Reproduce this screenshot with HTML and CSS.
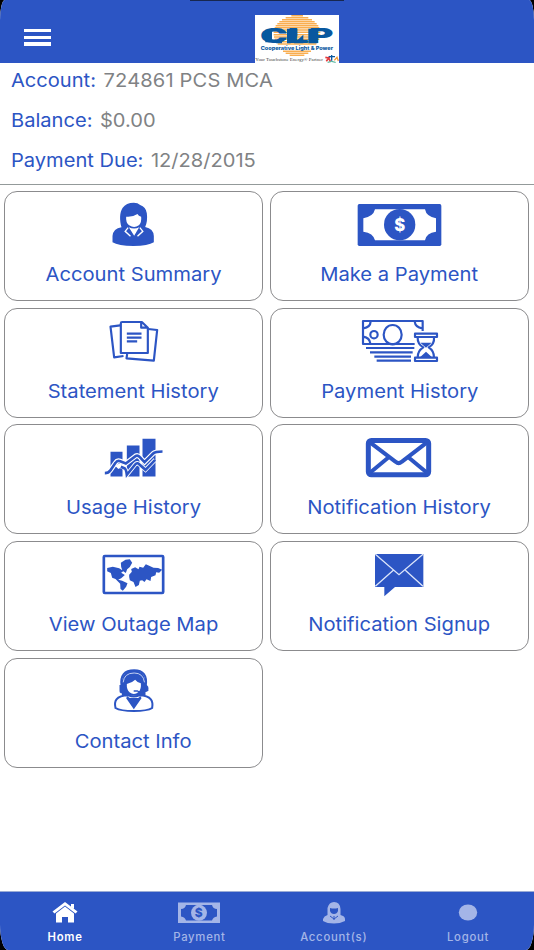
FILE: index.html
```html
<!DOCTYPE html>
<html lang="en">
<head>
    <meta charset="UTF-8">
    <meta name="viewport" content="width=device-width, initial-scale=1.0">
    <title>Cooperative Light &amp; Power</title>
    <link rel="stylesheet" href="styles.css">
</head>
<body>
    <div class="app">
        <div class="notch"></div>
        <header class="header">
            <button class="menu-btn" aria-label="Menu"><span></span><span></span><span></span></button>
            <svg class="logo" viewBox="45 30 252 144">
                <rect x="45" y="30" width="252" height="144" fill="#fff"/>
                <g stroke="#f9ae50" stroke-width="4.5">
                    <path d="M154 32h35M137 38h68M126 44h90M118 50h106M112 56h118M107 62h128M104 68h134M102 75h138M101 82h140M101 89h140M102 96h138M104 103h134M108 110h126M113 117h116M129 139h84M137 145h68M149 151h44"/>
                </g>
                <text class="logo-name" x="60" y="115" textLength="220" lengthAdjust="spacingAndGlyphs">CLP</text>
                <path d="M76 74h20v38H76zM108 71h18v14zM108 115h18v-14zM141 71h31v22l-20 22h-11zM162 115l28-26v26zM205 71h27v44h-27z" fill="#08589f"/>
                <text class="logo-sub" x="62" y="134" textLength="217" lengthAdjust="spacingAndGlyphs">Cooperative Light &amp; Power</text>
                <text class="logo-tag" x="46" y="167" textLength="203" lengthAdjust="spacingAndGlyphs">Your Touchstone Energy® Partner</text>
                <path d="M256 157l10 2 5 10M270 154l-11 15" fill="none" stroke="#e23b3d" stroke-width="5"/>
                <path d="M275 150v17M266 155h19" stroke="#08589f" stroke-width="4"/>
                <path d="M283 166l8-9 4 11" fill="none" stroke="#f39a35" stroke-width="4"/>
                <path d="M263 172q12-5 24 0" fill="none" stroke="#38a98b" stroke-width="3"/>
            </svg>
        </header>

        <section class="account">
            <div class="account-row number"><span class="label">Account:</span><span class="value">724861 PCS MCA</span></div>
            <div class="account-row"><span class="label">Balance:</span><span class="value">$0.00</span></div>
            <div class="account-row"><span class="label">Payment Due:</span><span class="value">12/28/2015</span></div>
        </section>

        <main class="tiles">
            <a class="tile">
                <svg class="tile-icon" viewBox="-4.5 0 240 180">
                    <path class="fill" d="M78 97C72 76 72 53 81 39Q92 23 115 23Q127 23 134 30Q151 35 154 55Q157 79 149 96Q174 101 175 123V142Q158 153 114 153Q68 153 51 142V123Q53 101 78 97z"/>
                    <path class="paper" d="M92 65Q111 67 126 57Q129 63 137 65Q139 82 130 91Q116 101 101 91Q90 82 92 65zM100 97Q116 104 131 97L116 122z"/>
                    <path class="paper-line" d="M98 98L89 109L105 124M133 98L142 109L126 124"/>
                </svg>
                <span>Account Summary</span>
            </a>
            <a class="tile">
                <svg class="tile-icon wide" viewBox="0 0 300 180">
                    <rect class="fill" x="23" y="27" width="251" height="126" rx="5"/>
                    <path class="paper" d="M75 43H225Q229 65 258 70V110Q229 113 225 136H75Q70 114 40 110V70Q70 65 75 43z"/>
                    <circle class="fill" cx="149" cy="89" r="47"/>
                    <text class="dollar" x="149" y="107">$</text>
                </svg>
                <span>Make a Payment</span>
            </a>
            <a class="tile">
                <svg class="tile-icon" viewBox="-4.5 0 240 180">
                    <g class="line">
                        <path d="M74 40L45 44L56 136L84 132M158 51L185 54L175 146L93 139L95 126"/>
                        <path d="M80 30H139L157 47V123H76V34Q76 30 80 30zM137 32V47H156M94 65H138M94 77H138M94 88H125"/>
                    </g>
                </svg>
                <span>Statement History</span>
            </a>
            <a class="tile">
                <svg class="tile-icon wide" viewBox="0 0 300 180">
                    <g class="line">
                        <path d="M194 96H39V27H218V57M62 28Q61 46 40 49M194 28Q196 46 217 49M40 74Q59 77 61 95M48 108H193M60 121H188M73 134H183M80 146H183"/>
                        <ellipse cx="128" cy="68" rx="27" ry="29"/>
                        <circle cx="72" cy="68" r="11"/>
                        <path d="M195 65H261V75H195zM195 137H261V147H195zM203 76Q202 96 220 106Q203 116 203 136M252 76Q254 96 236 106Q252 116 252 136"/>
                    </g>
                    <path class="fill" d="M211 92H245L228 107zM210 136L228 119L246 136z"/>
                </svg>
                <span>Payment History</span>
            </a>
            <a class="tile">
                <svg class="tile-icon" viewBox="-4.5 -4.5 240 180">
                    <path class="fill" d="M45 67H81V141H45zM94 48H132V141H94zM141 28H180V141H141z"/>
                    <path class="chart-gap" d="M28 131Q39 131 45 122L60 100Q65 92 74 95L91 102L121 79Q127 76 133 83L147 98L173 72Q179 66 201 66"/>
                    <path class="chart-gap lower" d="M64 114Q70 108 76 110L88 116Q92 120 94 136L119 105Q125 98 131 104L150 121L179 91"/>
                    <path class="chart-line" d="M28 131Q39 131 45 122L60 100Q65 92 74 95L91 102L121 79Q127 76 133 83L147 98L173 72Q179 66 201 66M76 112L88 117Q92 120 94 136L119 105Q125 98 131 104L150 121L179 91"/>
                </svg>
                <span>Usage History</span>
            </a>
            <a class="tile">
                <svg class="tile-icon wide" viewBox="0 -4.5 300 180">
                    <rect class="envelope" x="55" y="33" width="181" height="103" rx="9"/>
                    <path class="envelope flap" d="M59 38L137 97Q146 105 155 97L232 38M60 130L116 83M231 130L175 83"/>
                </svg>
                <span>Notification History</span>
            </a>
            <a class="tile">
                <svg class="tile-icon" viewBox="-4.5 0 240 180">
                    <rect class="map-frame" x="25" y="33" width="178" height="111" rx="3"/>
                    <path class="fill" d="M35 69L52 65L71 70L84 78L77 83L88 90L77 100L68 104L80 107L96 115L92 125L82 137L75 132L74 116L60 102L50 98L46 84L35 79zM76 53L90 44L103 43L110 53L103 66L95 73L91 84L81 77L77 66z"/>
                    <path class="fill" d="M101 89L109 80L107 72L119 67L129 73L132 65L143 68L151 58L161 62L174 68L188 69L200 74L191 83L182 82L180 91L167 96L165 108L153 103L147 111L140 106L133 107L130 120L120 126L114 111L103 106L101 96z"/>
                </svg>
                <span>View Outage Map</span>
            </a>
            <a class="tile">
                <svg class="tile-icon wide" viewBox="0 0 300 180">
                    <path class="fill" d="M75 27H220V126H135L103 154V126H75z"/>
                    <path class="fold" d="M76 28L147 89L219 28M76 124L130 76M219 124L166 76"/>
                </svg>
                <span>Notification Signup</span>
            </a>
            <a class="tile">
                <svg class="tile-icon" viewBox="-4.5 6 240 180">
                    <path class="fill" d="M79 107V62Q83 32 115 31Q147 32 150 63V107z"/>
                    <path class="headset" d="M78 77Q72 31 116 31Q157 31 151 77"/>
                    <path class="headset-gap" d="M83 67Q86 39 116 39Q143 39 147 67"/>
                    <path class="fill" d="M72 75h10v25h-6q-5-2-4-9zM147 75h7q6 5 5 12q-1 8-12 10z"/>
                    <path class="paper" d="M94 72Q110 68 119 59Q125 67 136 70Q138 88 129 96Q116 107 102 97Q93 88 94 72z"/>
                    <path class="contact-body" d="M99 106Q72 107 63 118Q56 127 60 144Q75 153 115 153Q156 153 170 144Q173 127 166 118Q157 107 131 106Q115 113 99 106z"/>
                    <path class="fill" d="M95 109L103 114H128L135 109L138 115L115 148L92 115z"/>
                    <path class="mic" d="M116 93H126Q133 98 145 95L157 91"/>
                </svg>
                <span>Contact Info</span>
            </a>
        </main>

        <nav class="tabs">
            <a class="tab active">
                <svg class="tab-icon" viewBox="0 0 44 24">
                    <path d="M22 1L34.5 10.5L32.5 12.5L22 4.5L11.5 12.5L9.5 10.5z"/>
                    <path d="M22 5.5L31 12.5V21.5H25V16H19V21.5H13V12.5z"/>
                    <path d="M28 3h3v5l-3-2z"/>
                </svg>
                <span>Home</span>
            </a>
            <a class="tab">
                <svg class="tab-icon" viewBox="0 0 44 24">
                    <path fill-rule="evenodd" d="M1 1.5H43V22H1zM9 4Q8 8 4 8V15.5Q8 16 9 19.5H35Q36 16 40 15.5V8Q36 8 35 4z"/>
                    <circle cx="22" cy="11.8" r="8"/>
                    <text class="tab-dollar" x="22" y="16">$</text>
                </svg>
                <span>Payment</span>
            </a>
            <a class="tab">
                <svg class="tab-icon" viewBox="0 0 44 24">
                    <path fill-rule="evenodd" d="M15.5 14V7Q17 1 22 1Q28 1 28.5 8V14Q33 15 33 18V20Q28 22.5 22 22.5Q15 22.5 11 20V18Q12 15 15.5 14zM18 7Q22 8 26 7V10Q25 13 22 13Q19 13 18 10z"/>
                    <path class="collar" d="M18 15L22 18L26 15M22 15V19"/>
                </svg>
                <span>Account(s)</span>
            </a>
            <a class="tab">
                <svg class="tab-icon" viewBox="0 0 44 24"><ellipse cx="22" cy="11.5" rx="9.2" ry="8"/></svg>
                <span>Logout</span>
            </a>
        </nav>
    </div>
</body>
</html>
```
FILE: styles.css
```css
* {
    box-sizing: border-box;
}

body {
    margin: 0;
    background-color: #000;
    font-family: Inter, "Liberation Sans", sans-serif;
    font-size: 18.7px;
    color: #2c55c4;
}

.app {
    height: 950px;
    display: flex;
    flex-direction: column;
    position: relative;
    overflow: hidden;
    background-color: #fff;
    border-radius: 5px 5px 8px 8px / 20px 20px 26px 26px;
}

.notch {
    position: absolute;
    top: 0;
    left: 190px;
    width: 154px;
    height: 1px;
    background-color: #17274f;
}

.header {
    height: 63px;
    flex-shrink: 0;
    display: flex;
    align-items: flex-start;
    background-color: #2c55c4;
    padding: 15px 0 0 24px;
}

.menu-btn {
    width: 27px;
    margin: 14px 204px 0 0;
    padding: 0;
    border: none;
    background: none;
    display: flex;
    flex-direction: column;
    gap: 3.5px;
}

.menu-btn span {
    height: 3.2px;
    background-color: #fff;
}

.logo {
    width: 84px;
    height: 48px;
}

.logo-name {
    font-size: 60px;
    font-weight: 900;
    fill: #08589f;
}

.logo-sub {
    font-size: 14px;
    font-weight: 800;
    fill: #08589f;
}

.logo-tag {
    font-family: "Liberation Serif", serif;
    font-size: 14px;
    fill: #444;
}

.account {
    height: 121.5px;
    flex-shrink: 0;
    padding: 0 11px;
    border-bottom: 1.5px solid #939a9a;
}

/* labels are set slightly extended */
.account-row {
    height: 40px;
    padding-top: 5.5px;
    line-height: 24px;
    display: flex;
    gap: 7px;
    white-space: nowrap;
    transform: scaleX(1.075);
    transform-origin: left;
}

.number .value {
    letter-spacing: 0.15px;
}

.value {
    color: #808284;
}

.tiles {
    flex: 1;
    display: grid;
    grid-template-columns: 259px 259px;
    grid-auto-rows: 110px;
    gap: 6.7px 7px;
    padding: 6.5px 4px;
}

.tile {
    display: flex;
    flex-direction: column;
    align-items: center;
    padding-top: 3px;
    border: 1.4px solid #8b8b8d;
    border-radius: 13px;
    white-space: nowrap;
}

.tile span {
    line-height: 24px;
    margin-top: 8px;
    transform: scaleX(1.08);
}

.tile-icon {
    width: 80px;
    height: 60px;
    flex-shrink: 0;
}

.tile-icon.wide {
    width: 100px;
}

.fill {
    fill: #2c55c4;
}

.paper {
    fill: #fff;
}

.paper-line {
    fill: none;
    stroke: #fff;
    stroke-width: 4;
}

.line {
    fill: none;
    stroke: #2c55c4;
    stroke-width: 6.5;
    stroke-linejoin: round;
}

.dollar {
    font-size: 50px;
    font-weight: 800;
    text-anchor: middle;
    fill: #fff;
}

.chart-gap {
    fill: none;
    stroke: #fff;
    stroke-width: 15;
}

.chart-gap.lower {
    stroke-width: 13;
}

.chart-line {
    fill: none;
    stroke: #2c55c4;
    stroke-width: 8;
}

.envelope {
    fill: none;
    stroke: #2c55c4;
    stroke-width: 15;
}

.envelope.flap {
    stroke-width: 12;
}

.map-frame {
    fill: none;
    stroke: #2c55c4;
    stroke-width: 8;
}

.fold {
    fill: none;
    stroke: #dce5fa;
    stroke-width: 4;
}

.headset {
    fill: none;
    stroke: #2c55c4;
    stroke-width: 6;
}

.headset-gap {
    fill: none;
    stroke: #c3d0f3;
    stroke-width: 3;
}

.contact-body {
    fill: #fff;
    stroke: #2c55c4;
    stroke-width: 6;
}

.mic {
    fill: none;
    stroke: #2c55c4;
    stroke-width: 4;
    stroke-linecap: round;
}

.tabs {
    height: 59.5px;
    flex-shrink: 0;
    display: grid;
    grid-template-columns: repeat(4, 134.3px);
    margin-left: -2px;
    background-color: #2c55c4;
    border-top: 1px solid #9bacd5;
}

.tab {
    display: flex;
    flex-direction: column;
    align-items: center;
    padding-top: 9px;
    font-size: 11.3px;
    font-weight: 500;
    letter-spacing: 0.75px;
    color: #a4b5e7;
    fill: #a4b5e7;
}

.tab.active {
    color: #fff;
    fill: #fff;
    font-weight: 600;
}

.tab-icon {
    width: 44px;
    height: 24px;
}

.tab span {
    line-height: 14px;
    margin-top: 5px;
}

.tab-dollar {
    font-size: 12px;
    font-weight: 800;
    text-anchor: middle;
    fill: #2c55c4;
}

.collar {
    fill: none;
    stroke: #2c55c4;
    stroke-width: 1;
}
```
